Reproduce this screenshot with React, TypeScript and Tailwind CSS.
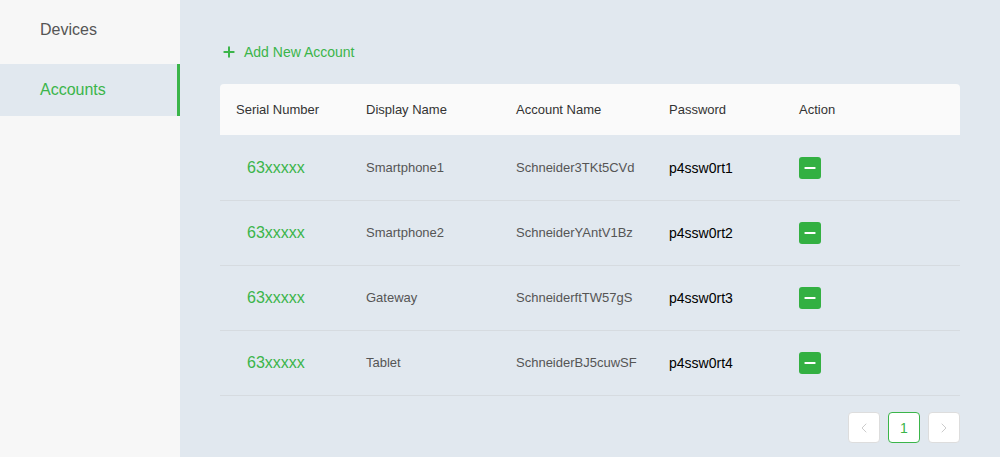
import { Plus, Minus, ChevronLeft, ChevronRight } from 'lucide-react';

type Account = {
  serial: string;
  display: string;
  account: string;
  password: string;
};

const ACCOUNTS: Account[] = [
  { serial: '63xxxxx', display: 'Smartphone1', account: 'Schneider3TKt5CVd', password: 'p4ssw0rt1' },
  { serial: '63xxxxx', display: 'Smartphone2', account: 'SchneiderYAntV1Bz', password: 'p4ssw0rt2' },
  { serial: '63xxxxx', display: 'Gateway', account: 'SchneiderftTW57gS', password: 'p4ssw0rt3' },
  { serial: '63xxxxx', display: 'Tablet', account: 'SchneiderBJ5cuwSF', password: 'p4ssw0rt4' },
];

// Column widths shared by the header and body rows.
const COLS = 'grid grid-cols-[130px_150px_153px_130px_1fr]';

function Sidebar() {
  return (
    <aside className="w-[180px] shrink-0 bg-[#f7f7f7]">
      <div className="flex h-[60px] items-center pl-10 text-base text-[#555]">Devices</div>
      <div className="mt-1 flex h-[52px] items-center border-r-[3px] border-[#3bb54a] bg-[#e1e8ef] pl-10 text-base text-[#3bb54a]">
        Accounts
      </div>
    </aside>
  );
}

export default function App() {
  return (
    <div className="flex h-[457px] w-[1000px] bg-[#e1e8ef] font-['Liberation_Sans',Arial,sans-serif]">
      <Sidebar />
      <main className="flex-1 pl-10 pr-10">
        <button type="button" className="mt-[42px] flex items-center gap-[7px] pl-px text-sm text-[#3bb54a]">
          <Plus className="h-4 w-4" strokeWidth={3} />
          Add New Account
        </button>
        <div className="mt-[22px]">
          <div className={`${COLS} h-[51px] items-center rounded-t bg-[#fafafa] pl-4 text-[13px] text-[#333]`}>
            <span>Serial Number</span>
            <span>Display Name</span>
            <span>Account Name</span>
            <span>Password</span>
            <span>Action</span>
          </div>
          <div className="mt-px">
            {ACCOUNTS.map((a) => (
              <div
                key={a.display}
                className={`${COLS} h-[65px] items-center border-b border-[#d6dbe0] pl-4 text-[13px] text-[#555]`}
              >
                <span className="pl-[11px] text-base text-[#3bb54a]">{a.serial}</span>
                <span>{a.display}</span>
                <span>{a.account}</span>
                <span className="text-sm text-black">{a.password}</span>
                <span>
                  <button
                    type="button"
                    aria-label="Remove account"
                    className="flex h-[22px] w-[22px] items-center justify-center rounded-[3px] bg-[#33b042] text-white"
                  >
                    <Minus className="h-4 w-4" strokeWidth={3} />
                  </button>
                </span>
              </div>
            ))}
          </div>
          <div className="mt-4 flex justify-end gap-2">
            <button type="button" className="flex h-[31px] w-8 items-center justify-center rounded border border-[#ddd] bg-white text-[#ccc]">
              <ChevronLeft className="h-4 w-4" strokeWidth={1.5} />
            </button>
            <button type="button" className="flex h-[31px] w-8 items-center justify-center rounded border border-[#3bb54a] bg-white text-sm text-[#3bb54a]">
              1
            </button>
            <button type="button" className="flex h-[31px] w-8 items-center justify-center rounded border border-[#ddd] bg-white text-[#ccc]">
              <ChevronRight className="h-4 w-4" strokeWidth={1.5} />
            </button>
          </div>
        </div>
      </main>
    </div>
  );
}
